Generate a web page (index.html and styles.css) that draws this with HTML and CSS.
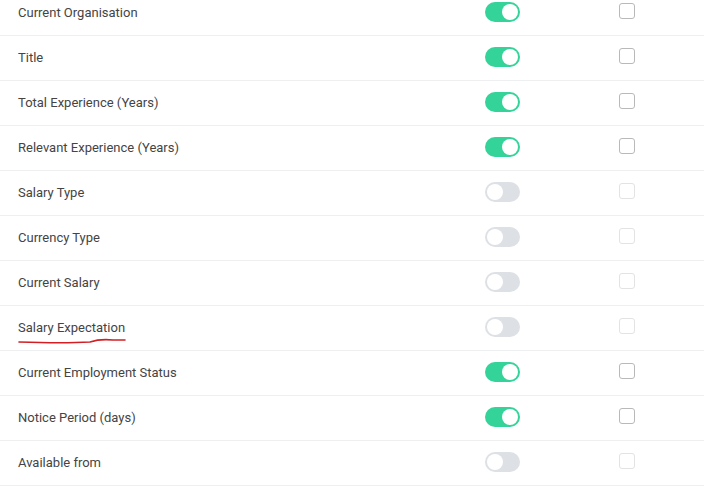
FILE: index.html
```html
<!DOCTYPE html>
<html lang="en">
<head>
    <meta charset="UTF-8">
    <link rel="stylesheet" href="styles.css">
    <title>Candidate Fields</title>
</head>
<body>
    <div class="field-list">
        <div class="field-row">
            <span class="field-name">Current Organisation</span>
            <span class="toggle on"></span>
            <span class="check"></span>
        </div>
        <div class="field-row">
            <span class="field-name">Title</span>
            <span class="toggle on"></span>
            <span class="check"></span>
        </div>
        <div class="field-row">
            <span class="field-name">Total Experience (Years)</span>
            <span class="toggle on"></span>
            <span class="check"></span>
        </div>
        <div class="field-row">
            <span class="field-name">Relevant Experience (Years)</span>
            <span class="toggle on"></span>
            <span class="check"></span>
        </div>
        <div class="field-row">
            <span class="field-name">Salary Type</span>
            <span class="toggle"></span>
            <span class="check disabled"></span>
        </div>
        <div class="field-row">
            <span class="field-name">Currency Type</span>
            <span class="toggle"></span>
            <span class="check disabled"></span>
        </div>
        <div class="field-row">
            <span class="field-name">Current Salary</span>
            <span class="toggle"></span>
            <span class="check disabled"></span>
        </div>
        <div class="field-row">
            <span class="field-name marked">Salary Expectation
                <svg class="scribble" width="110" height="8" viewBox="0 0 110 8">
                    <path d="M1 5 C30 6 55 6 72 5 C78 3 85 2 95 3 L107 3" fill="none" stroke="#d11f24" stroke-width="1.6" stroke-linecap="round"/>
                </svg>
            </span>
            <span class="toggle"></span>
            <span class="check disabled"></span>
        </div>
        <div class="field-row">
            <span class="field-name">Current Employment Status</span>
            <span class="toggle on"></span>
            <span class="check"></span>
        </div>
        <div class="field-row">
            <span class="field-name">Notice Period (days)</span>
            <span class="toggle on"></span>
            <span class="check"></span>
        </div>
        <div class="field-row">
            <span class="field-name">Available from</span>
            <span class="toggle"></span>
            <span class="check disabled"></span>
        </div>
    </div>
</body>
</html>
```

FILE: styles.css
```css
body {
    margin: 0;
    background-color: #fff;
    font-family: Roboto, 'Noto Sans', sans-serif;
    overflow: hidden;
}

.field-list {
    margin-top: -9px;
}

.field-row {
    display: grid;
    grid-template-columns: 467px 134px 1fr;
    align-items: center;
    height: 44px;
    padding-left: 18px;
    border-bottom: 1px solid #eeeff1;
}

.field-name {
    font-size: 13px;
    color: #444;
    margin-top: -1px;
}

.marked {
    position: relative;
}

.scribble {
    position: absolute;
    left: 0;
    top: 17px;
}

.toggle {
    position: relative;
    width: 35px;
    height: 20px;
    border-radius: 10px;
    background-color: #dde0e5;
    margin-top: -3px;
}

.toggle::after {
    content: '';
    position: absolute;
    top: 2px;
    left: 2px;
    width: 16px;
    height: 16px;
    border-radius: 50%;
    background-color: #fff;
}

.toggle.on {
    background-color: #34d399;
}

.toggle.on::after {
    left: 17px;
}

.check {
    width: 14px;
    height: 14px;
    border: 1px solid #b9b9b9;
    border-radius: 3px;
    margin-top: -5px;
}

.check.disabled {
    border-color: #e3e3e3;
}
```
